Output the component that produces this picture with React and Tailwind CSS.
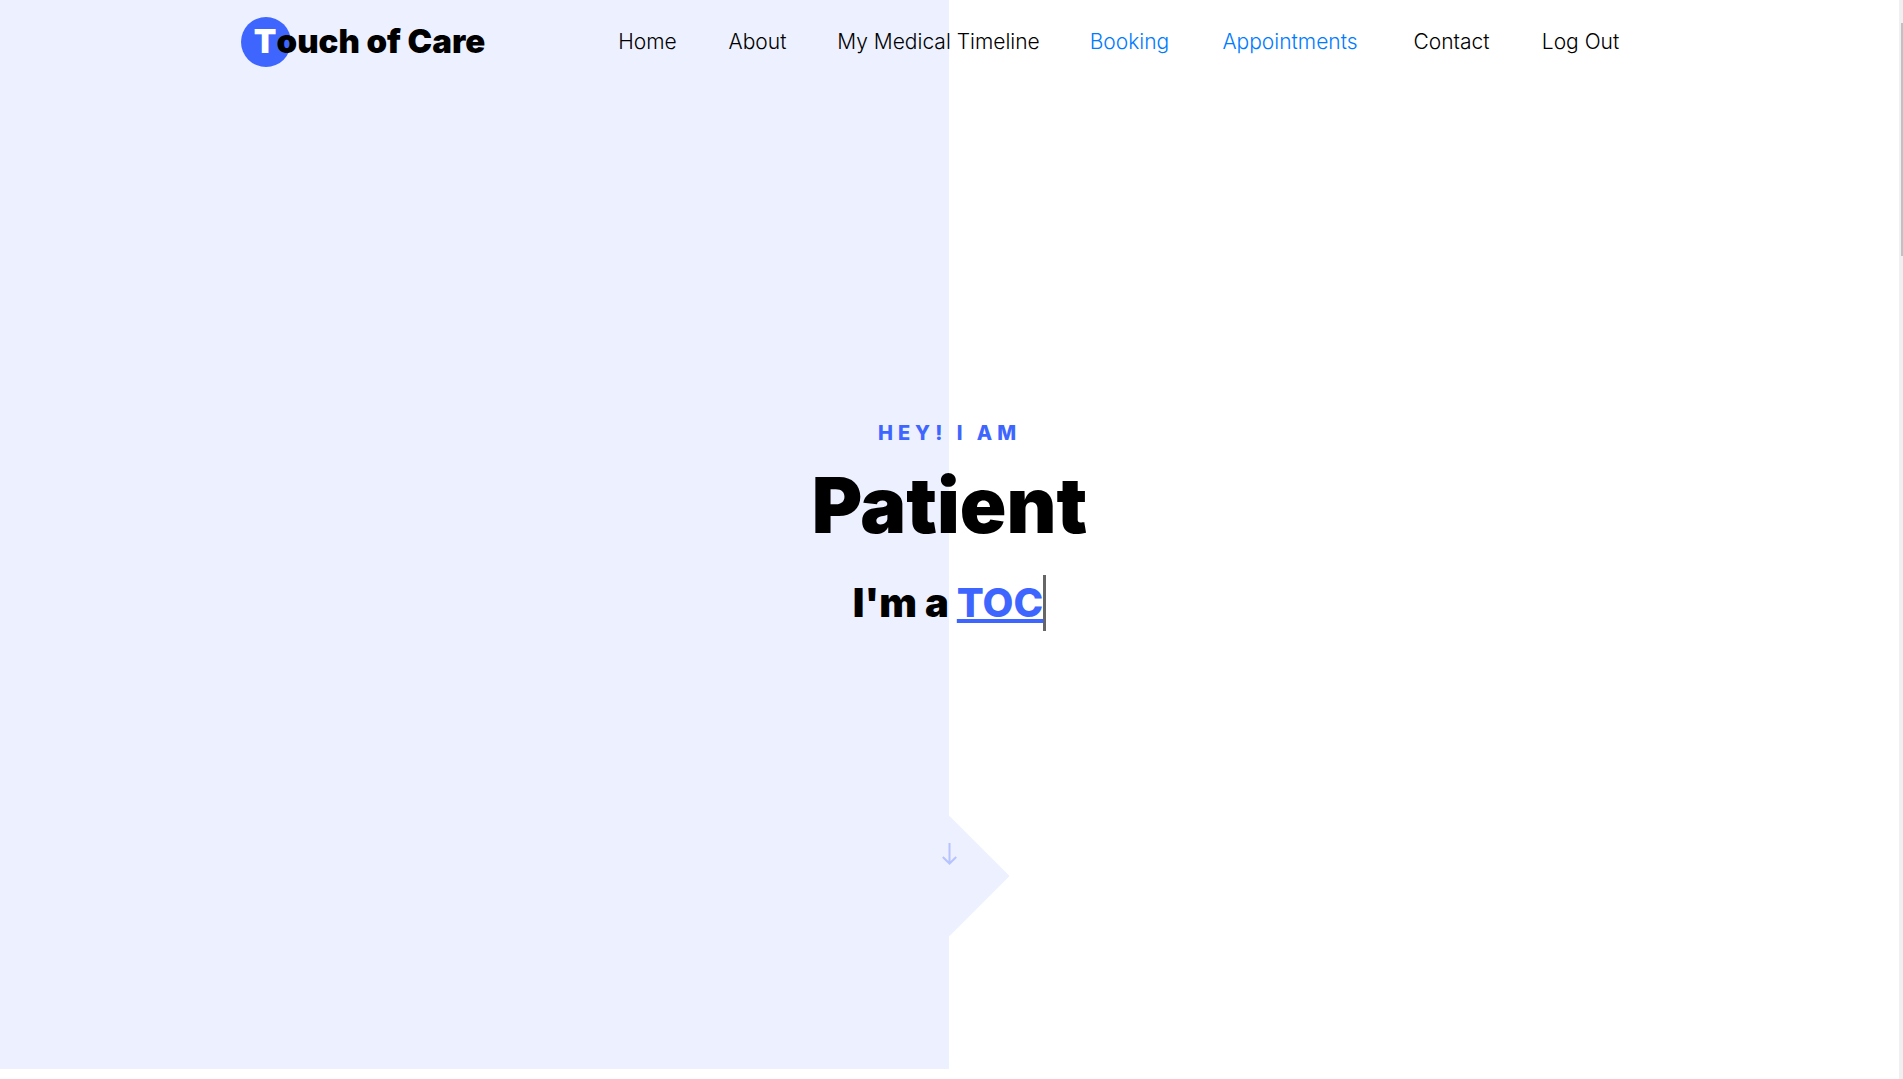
const links = [
  { label: "Home", width: "w-[60px]" },
  { label: "About", width: "w-[60px]" },
  { label: "My Medical Timeline", width: "w-[202px]" },
  { label: "Booking", width: "w-[80px]", highlight: true },
  { label: "Appointments", width: "w-[141px]", highlight: true },
  { label: "Contact", width: "w-[82px]" },
  { label: "Log Out", width: "w-[76px]" },
];

function Header() {
  return (
    <header className="mx-auto flex h-[84px] w-full max-w-[1418px] items-center justify-between">
      <a href="#home" className="flex h-[50px] items-center text-[33px] font-black whitespace-nowrap">
        <span className="flex size-[50px] items-center justify-end rounded-full bg-[#3e66ff] pr-3.5 text-white">T</span>
        <span className="-ml-3.5">ouch of Care</span>
      </a>
      <nav className="pr-10">
        <ul className="flex gap-[50px]">
          {links.map(({ label, width, highlight }) => (
            <li key={label} className={`${width} flex justify-center`}>
              <a
                href="#home"
                className={`text-[21px] leading-[28px] font-light whitespace-nowrap ${highlight ? "text-[#007bff]" : "text-black"}`}
              >
                {label}
              </a>
            </li>
          ))}
        </ul>
      </nav>
    </header>
  );
}

function ScrollDown() {
  return (
    <a
      href="#about"
      aria-label="Scroll down"
      className="absolute bottom-[133px] left-1/2 flex h-[120px] w-[120px] -translate-x-1/2 justify-center bg-[#ecf0ff] pt-[27px] [clip-path:polygon(50%_0,100%_50%,50%_100%,0_50%)]"
    >
      <svg width="16" height="22" viewBox="0 0 16 22" fill="none" stroke="#b6c3ff" strokeWidth="2">
        <path d="M7.5 0V20M0.8 14L7.5 20.5L14.2 14" />
      </svg>
    </a>
  );
}

export default function App() {
  return (
    <div className="flex h-screen overflow-hidden bg-white font-['Inter',sans-serif] text-black">
      <main className="min-w-0 flex-1 pb-2.5">
        <section
          id="home"
          className="relative flex h-full flex-col bg-[linear-gradient(to_right,#ecf0ff_50%,#ffffff_50%)]"
        >
          <Header />
          <div className="flex flex-col items-center pt-[334px] text-center">
            <h6 className="text-[20px] leading-[30px] font-extrabold tracking-[5px] text-[#3e66ff] uppercase">
              Hey! I am
            </h6>
            <h1 className="mt-3 text-[77px] leading-[90px] font-black">Patient</h1>
            <h2 className="mt-[25px] flex text-[40px] leading-[56px] font-black">
              <span className="whitespace-pre">I'm a </span>
              <span className="border-r-[3px] border-[#666666] font-extrabold text-[#3e66ff] underline decoration-4 underline-offset-2">
                TOC
              </span>
            </h2>
          </div>
          <ScrollDown />
        </section>
      </main>
      <div className="w-1 bg-[#f0f0f0] pt-[23px] pl-0.5" aria-hidden="true">
        <div className="h-[233px] bg-[#c1c1c1]" />
      </div>
    </div>
  );
}
